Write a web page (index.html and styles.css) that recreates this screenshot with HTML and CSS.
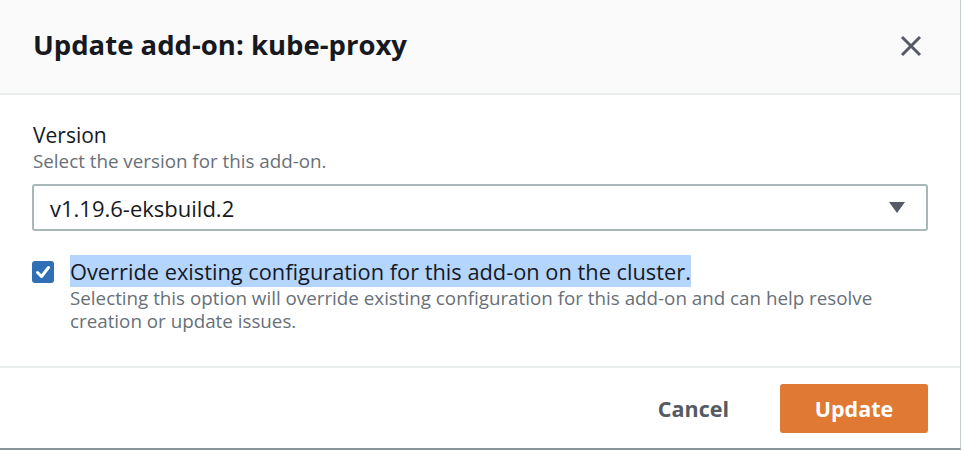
FILE: index.html
```html
<!DOCTYPE html>
<html lang="en">
<head>
<meta charset="utf-8">
<title>Update add-on: kube-proxy</title>
<link rel="stylesheet" href="styles.css">
</head>
<body>
<div class="modal">
  <header class="modal-header">
    <h1 class="modal-title">Update add-on: kube-proxy</h1>
    <button class="close-btn" aria-label="Close">
      <svg width="22" height="22" viewBox="0 0 22 22"><path d="M2 2 L20 20 M20 2 L2 20" stroke="#545b64" stroke-width="3" fill="none"/></svg>
    </button>
  </header>
  <section class="modal-body">
    <div class="field">
      <div class="field-label">Version</div>
      <div class="field-desc">Select the version for this add-on.</div>
      <div class="select">
        <span class="select-value">v1.19.6-eksbuild.2</span>
        <svg class="caret" width="16" height="11" viewBox="0 0 16 11"><path d="M0 0 H16 L8 11 Z" fill="#545b64"/></svg>
      </div>
    </div>
    <div class="check-row">
      <span class="checkbox">
        <svg width="22" height="22" viewBox="0 0 22 22"><path d="M5.5 11.5 L9.5 15.5 L16.5 6.5" stroke="#fff" stroke-width="3" fill="none" stroke-linecap="round" stroke-linejoin="round"/></svg>
      </span>
      <div class="check-text">
        <div class="check-label"><span class="hl">Override existing configuration for this add-on on the cluster.</span></div>
        <div class="check-desc">Selecting this option will override existing configuration for this add-on and can help resolve creation or update issues.</div>
      </div>
    </div>
  </section>
  <footer class="modal-footer">
    <button class="btn-link">Cancel</button>
    <button class="btn-primary">Update</button>
  </footer>
</div>
</body>
</html>
```
FILE: styles.css
```css
html, body {
  margin: 0;
  padding: 0;
  background: #ffffff;
}
body {
  font-family: "Open Sans", "Noto Sans", sans-serif;
  color: #16191f;
}
.modal {
  width: 960px;
  height: 448px;
  border-right: 1px solid #c5cccc;
  border-bottom: 2px solid #879596;
  display: flex;
  flex-direction: column;
  background: #fff;
}
.modal-header {
  flex: none;
  height: 95px;
  box-sizing: border-box;
  background: #fafafa;
  border-bottom: 2px solid #eaeded;
  display: flex;
  align-items: center;
  justify-content: space-between;
  padding: 0 38px 4px 33px;
}
.modal-title {
  margin: 0;
  font-size: 27.5px;
  line-height: 37.5px;
  font-weight: 700;
  color: #16191f;
}
.close-btn {
  border: 0;
  background: none;
  padding: 0;
  width: 22px;
  height: 22px;
  margin-top: 2px;
  display: flex;
}
.modal-body {
  flex: 1;
  padding: 27px 32px 0 32px;
}
.field-label {
  font-size: 21px;
  line-height: 26px;
  padding-left: 1px;
}
.field-desc {
  font-size: 18.8px;
  line-height: 26px;
  color: #687078;
  padding-left: 1px;
}
.select {
  margin-top: 10px;
  height: 47px;
  box-sizing: border-box;
  border: 2px solid #aab7b8;
  border-radius: 3px;
  display: flex;
  align-items: center;
  justify-content: space-between;
  padding: 0 21px 0 16px;
  width: 896px;
}
.select-value {
  font-size: 22px;
  line-height: 30px;
}
.check-row {
  display: flex;
  align-items: flex-start;
  margin-top: 24px;
}
.checkbox {
  width: 22px;
  height: 22px;
  background: #2f6fb5;
  border-radius: 3px;
  margin-top: 6px;
  flex: none;
  display: flex;
}
.check-text {
  margin-left: 16px;
}
.check-label {
  font-size: 21.8px;
  line-height: 32px;
}
.hl {
  background: #b4d5fe;
  padding: 1.5px 0;
}
.check-desc {
  font-size: 18.8px;
  line-height: 23px;
  color: #687078;
  width: 850px;
}
.modal-footer {
  flex: none;
  border-top: 2px solid #eaeded;
  height: 80px;
  display: flex;
  align-items: center;
  justify-content: flex-end;
  padding: 0 32px 0 0;
  gap: 51px;
}
.btn-link {
  border: 0;
  background: none;
  font-family: inherit;
  font-size: 21.5px;
  font-weight: 700;
  color: #545b64;
  padding: 0;
}
.btn-primary {
  border: 0;
  background: #df7934;
  color: #fff;
  font-family: inherit;
  font-size: 21.5px;
  font-weight: 700;
  width: 148px;
  height: 49px;
  border-radius: 3px;
}
```
